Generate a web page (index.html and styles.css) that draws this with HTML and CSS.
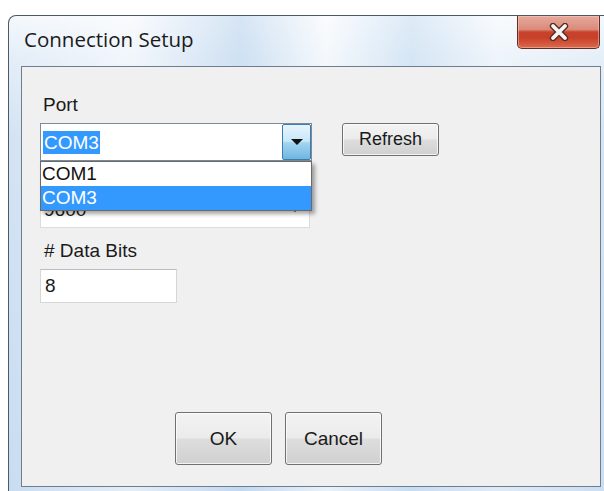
FILE: index.html
```html
<!DOCTYPE html>
<html lang="en">
<head>
<meta charset="utf-8">
<title>Connection Setup</title>
<link rel="stylesheet" href="styles.css">
</head>
<body>
<div class="window">
  <div class="titlebar">
    <span class="title">Connection Setup</span>
    <button class="close" aria-label="Close">
      <svg width="22" height="18" viewBox="0 0 22 18">
        <path d="M5 3 L17 15 M17 3 L5 15" stroke="#5a2b22" stroke-width="6.4" stroke-linecap="round"/>
        <path d="M5 3 L17 15 M17 3 L5 15" stroke="#f4f4f4" stroke-width="3.8" stroke-linecap="round"/>
      </svg>
    </button>
  </div>
  <div class="client">
    <div class="label label-port">Port</div>
    <div class="port-row">
      <div class="combo combo-open">
        <span class="combo-value"><span class="selected-text">COM3</span></span>
        <span class="combo-drop"><span class="arrow"></span></span>
        <ul class="combo-list">
          <li>COM1</li>
          <li class="active">COM3</li>
        </ul>
      </div>
      <button class="btn btn-refresh">Refresh</button>
    </div>
    <div class="combo combo-plain">
      <span class="combo-value">9600</span>
      <span class="arrow arrow-small"></span>
    </div>
    <div class="label label-bits"># Data Bits</div>
    <div class="textbox">8</div>
    <div class="actions">
      <button class="btn btn-dialog">OK</button>
      <button class="btn btn-dialog">Cancel</button>
    </div>
  </div>
</div>
</body>
</html>
```

FILE: styles.css
```css
* {
  box-sizing: border-box;
}

html,
body {
  margin: 0;
  width: 604px;
  height: 491px;
  overflow: hidden;
  background: #ffffff;
}

/* Window frame with glass title bar */
.window {
  margin: 15px 0 0 8px;
  width: 612px;
  height: 480px;
  border: 1px solid #4b5969;
  border-bottom: none;
  border-radius: 8px 8px 0 0;
  background:
    linear-gradient(90deg, rgba(255,255,255,0) 0%, rgba(255,255,255,0.5) 20%, rgba(190,214,238,0.55) 38%, rgba(255,255,255,0.6) 52%, rgba(200,222,242,0.5) 66%, rgba(255,255,255,0.4) 80%, rgba(255,255,255,0) 100%),
    linear-gradient(180deg, #f4f8fc 0%, #e4eef8 40px, #d3e3f3 120px, #c8dcf1 100%);
  display: flex;
  flex-direction: column;
  overflow: hidden;
}

.titlebar {
  height: 50px;
  display: flex;
  align-items: flex-start;
  padding-left: 15px;
  flex-shrink: 0;
}

.title {
  padding-top: 9px;
  font-family: "Open Sans", "Noto Sans", sans-serif;
  font-size: 20.5px;
  line-height: 28px;
  color: #1b1b1b;
}

.close {
  margin-left: auto;
  margin-right: 19px;
  width: 83px;
  height: 33px;
  padding: 0;
  border: 1px solid #5e2f26;
  border-top: none;
  border-radius: 0 0 5px 5px;
  background: linear-gradient(180deg, #e6a99c 0%, #da8a7a 42%, #c8432c 50%, #c7402a 68%, #dc6a4c 100%);
  box-shadow: inset 0 0 0 1px rgba(255, 210, 200, 0.45);
  display: flex;
  align-items: center;
  justify-content: center;
}

/* Client area */
.client {
  margin-left: 12px;
  width: 580px;
  height: 421px;
  flex-shrink: 0;
  background: #f0f0f0;
  border: 1px solid #6f7e8f;
  display: flex;
  flex-direction: column;
  align-items: flex-start;
  padding: 0 0 21px 18px;
  font-family: "Liberation Sans", Arial, sans-serif;
  font-size: 19px;
  color: #1a1a1a;
}

.label {
  line-height: 22px;
}

.label-port {
  margin-top: 27px;
  padding-left: 3px;
}

.label-bits {
  margin-top: 12px;
  padding-left: 4px;
}

.port-row {
  margin-top: 7px;
  display: flex;
  align-items: flex-start;
  gap: 30px;
}

/* Combo boxes */
.combo {
  position: relative;
  display: flex;
  align-items: stretch;
  background: #ffffff;
}

.combo-open {
  width: 272px;
  height: 38px;
  border: 1px solid #7d8b99;
}

.combo-value {
  flex: 1;
  display: flex;
  align-items: center;
  padding-left: 2px;
  white-space: nowrap;
}

.selected-text {
  background: #3399ff;
  color: #ffffff;
  line-height: 23px;
  padding: 0 1px;
}

.combo-drop {
  width: 29px;
  border: 1px solid #3c7cae;
  border-radius: 2px;
  background: linear-gradient(180deg, #e6f5fd 0%, #c8e7f8 48%, #a2d5f1 52%, #6fb6de 100%);
  display: flex;
  align-items: center;
  justify-content: center;
}

.arrow {
  width: 0;
  height: 0;
  border-left: 6px solid transparent;
  border-right: 6px solid transparent;
  border-top: 6px solid #111111;
}

.combo-list {
  position: absolute;
  left: -1px;
  right: -1px;
  top: 37px;
  z-index: 2;
  margin: 0;
  padding: 0;
  list-style: none;
  background: #ffffff;
  border: 1px solid #6a6a6a;
  box-shadow: 3px 3px 4px rgba(0, 0, 0, 0.35);
}

.combo-list li {
  height: 24px;
  line-height: 24px;
  padding-left: 1px;
  color: #111111;
}

.combo-list li.active {
  background: #3399ff;
  color: #ffffff;
}

.combo-plain {
  margin-top: 31px;
  width: 270px;
  height: 36px;
  border: 1px solid #dcdcdc;
  align-items: center;
  padding-right: 10px;
}

.combo-plain .combo-value {
  padding-left: 3px;
  line-height: 36px;
}

.arrow-small {
  border-left-width: 4px;
  border-right-width: 4px;
  border-top-width: 4px;
}

.textbox {
  margin-top: 7px;
  width: 137px;
  height: 34px;
  background: #ffffff;
  border: 1px solid #d6d6d6;
  border-top-color: #b9bcc2;
  padding-left: 4px;
  line-height: 32px;
}

/* Push buttons */
.btn {
  font-family: "Liberation Sans", Arial, sans-serif;
  color: #1a1a1a;
  border: 1px solid #707070;
  border-radius: 3px;
  background: linear-gradient(180deg, #f3f3f3 0%, #ebebeb 48%, #dddddd 52%, #d0d0d0 100%);
  box-shadow: inset 0 0 0 1px rgba(255, 255, 255, 0.75);
  padding: 0;
}

.btn-refresh {
  width: 97px;
  height: 33px;
  font-size: 18px;
}

.actions {
  margin-top: auto;
  padding-left: 135px;
  display: flex;
  gap: 13px;
}

.btn-dialog {
  width: 97px;
  height: 53px;
  font-size: 19px;
}
```
